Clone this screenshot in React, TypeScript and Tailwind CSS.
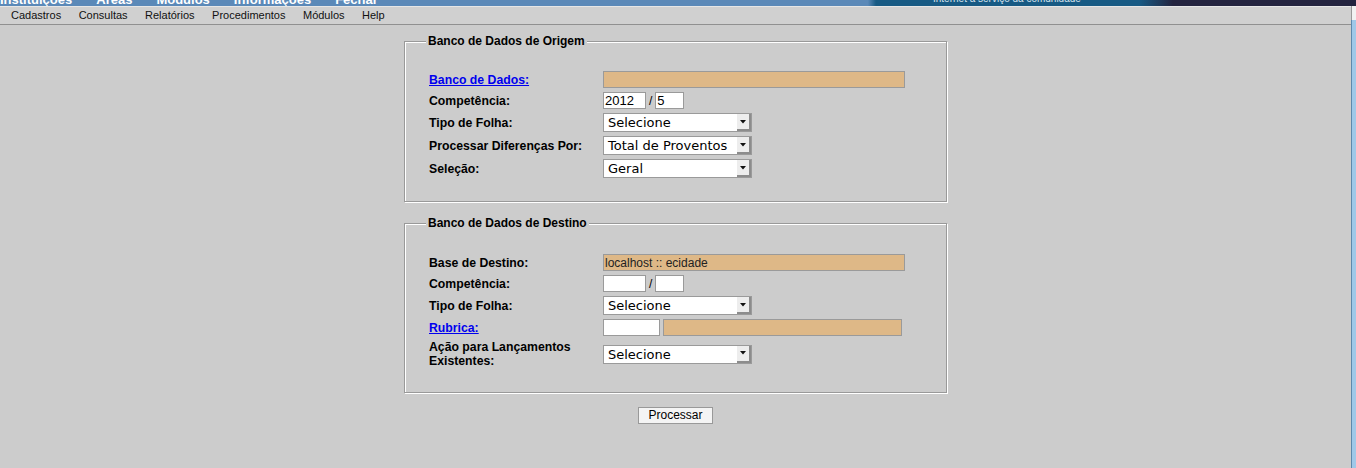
import React from "react";

const topLinks = ["Instituições", "Áreas", "Módulos", "Informações", "Fechar"];
const menuItems = ["Cadastros", "Consultas", "Relatórios", "Procedimentos", "Módulos", "Help"];

const Select: React.FC<{ value: string }> = ({ value }) => (
  <div className="flex h-[19px] w-[149px] items-stretch border border-[#9a9a9a] bg-white">
    <span className="flex-1 pl-[4px] font-['DejaVu_Sans',sans-serif] text-[13px] leading-[17px] text-black">
      {value}
    </span>
    <span className="flex w-[14px] items-center justify-center border-b-2 border-r-2 border-[#8c8c8c] bg-[#ededed]">
      <svg width="6" height="4" viewBox="0 0 6 4">
        <path d="M0 0h6L3 3.5z" fill="#111" />
      </svg>
    </span>
  </div>
);

const Input: React.FC<{ w: string; beige?: boolean; value?: string }> = ({ w, beige, value }) => (
  <div
    className={`flex h-[17px] items-center border border-[#9a9a9a] pl-[1px] text-[13px] leading-[15px] text-black ${w} ${
      beige ? "bg-[#deb887]" : "bg-white"
    }`}
  >
    {value}
  </div>
);

const Row: React.FC<{ h: string; label: React.ReactNode; link?: boolean; children: React.ReactNode }> = ({
  h,
  label,
  link,
  children,
}) => (
  <div className={`flex items-center ${h}`}>
    <div
      className={`w-[177px] pl-[3px] text-[12.25px] font-bold leading-[14px] ${
        link ? "text-[#0000ee] underline" : "text-black"
      }`}
    >
      {label}
    </div>
    <div className="flex items-center">{children}</div>
  </div>
);

const Fieldset: React.FC<{ title: string; className: string; children: React.ReactNode }> = ({
  title,
  className,
  children,
}) => (
  <fieldset
    className={`mx-auto w-[543px] border border-[#999] px-[21px] shadow-[inset_1px_1px_0_#fff,1px_1px_0_#fff] ${className}`}
  >
    <legend className="bg-[#cccccc] px-[2px] text-[12px] font-bold leading-[14px] text-black">{title}</legend>
    {children}
  </fieldset>
);

export default function App() {
  return (
    <div className="flex h-screen flex-col overflow-hidden bg-[#cccccc] font-['Liberation_Sans',Arial,sans-serif]">
      {/* faixa superior cortada */}
      <div className="flex h-[6px] shrink-0 overflow-hidden bg-[linear-gradient(90deg,#5b89b8_0%,#5b89b8_64%,#175a84_64.6%,#175a84_84%,#1f3b5c_85.5%,#23233f_86.5%,#23233f_100%)]">
        <div className="flex w-[870px] shrink-0 gap-[24px] text-[13px] font-bold leading-[15px] text-white">
          {topLinks.map((t) => (
            <span key={t} className="-mt-[8px]">
              {t}
            </span>
          ))}
        </div>
        <span className="-mt-[7px] ml-[63px] text-[10px] leading-[12px] text-[#d8e4ee]">
          Internet a serviço da comunidade
        </span>
      </div>

      <div className="flex flex-1">
        <div className="flex flex-1 flex-col">
          <div className="flex h-[19px] shrink-0 items-center gap-[17.5px] border-b border-t border-b-[#909090] border-t-[#e6e6e6] bg-[#d0d0d0] pl-[11px] text-[11px] text-[#111]">
            {menuItems.map((m) => (
              <span key={m}>{m}</span>
            ))}
          </div>

          <Fieldset title="Banco de Dados de Origem" className="mt-[9px] pb-[21px] pt-[21px]">
            <Row h="h-[21px]" label="Banco de Dados:" link>
              <Input w="w-[302px]" beige />
            </Row>
            <Row h="h-[21px]" label="Competência:">
              <Input w="w-[43px]" value="2012" />
              <span className="px-[3px] text-[12px] text-black">/</span>
              <Input w="w-[29px]" value="5" />
            </Row>
            <Row h="h-[23px]" label="Tipo de Folha:">
              <Select value="Selecione" />
            </Row>
            <Row h="h-[23px]" label="Processar Diferenças Por:">
              <Select value="Total de Proventos" />
            </Row>
            <Row h="h-[23px]" label="Seleção:">
              <Select value="Geral" />
            </Row>
          </Fieldset>

          <Fieldset title="Banco de Dados de Destino" className="mt-[14px] pb-[22px] pt-[22px]">
            <Row h="h-[21px]" label="Base de Destino:">
              <div className="flex h-[17px] w-[302px] items-center border border-[#9a9a9a] bg-[#deb887] pl-[1px] text-[12px] text-[#222]">
                localhost :: ecidade
              </div>
            </Row>
            <Row h="h-[21px]" label="Competência:">
              <Input w="w-[43px]" />
              <span className="px-[3px] text-[12px] text-black">/</span>
              <Input w="w-[29px]" />
            </Row>
            <Row h="h-[23px]" label="Tipo de Folha:">
              <Select value="Selecione" />
            </Row>
            <Row h="h-[21px]" label="Rubrica:" link>
              <Input w="w-[57px]" />
              <div className="w-[3px]" />
              <Input w="w-[239px]" beige />
            </Row>
            <Row
              h="h-[32px]"
              label={
                <>
                  Ação para Lançamentos
                  <br />
                  Existentes:
                </>
              }
            >
              <Select value="Selecione" />
            </Row>
          </Fieldset>

          <div className="mt-[14px] flex justify-center">
            <button className="h-[17px] w-[75px] border border-[#999] bg-[#f4f4f4] text-[12px] leading-[15px] text-black">
              Processar
            </button>
          </div>
        </div>

        <div className="flex w-[5px] shrink-0 flex-col">
          <div className="h-[14px] border-l border-[#999] bg-[#f2f2f2]" />
          <div className="flex-1 border-l border-[#5f89ad] bg-[#a0c8e8]" />
        </div>
      </div>
    </div>
  );
}
